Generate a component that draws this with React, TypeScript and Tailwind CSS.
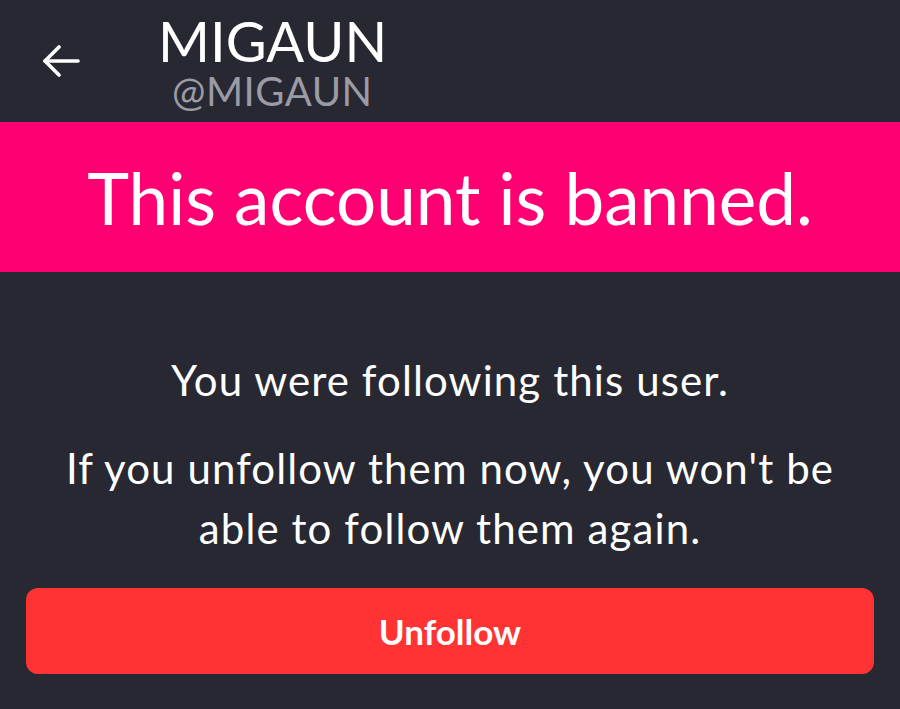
export default function App() {
  return (
    <div className="w-[900px] h-[709px] bg-[#272832] text-white overflow-hidden font-['Lato','Liberation_Sans',sans-serif] flex flex-col">
      {/* Header */}
      <header className="h-[122px] flex items-center">
        <button className="w-[122px] h-[122px] flex items-center justify-center">
          <svg width="38" height="32" viewBox="0 0 38 32" fill="none" stroke="white" strokeWidth="3.6" strokeLinecap="round" strokeLinejoin="round">
            <path d="M36 16H3" />
            <path d="M17 2L3 16l14 14" />
          </svg>
        </button>
        <div className="flex flex-col pl-[36px] mt-[2px]">
          <h1 className="text-[56px] leading-[58px] font-normal">MIGAUN</h1>
          <span className="text-[40px] leading-[42px] text-[#9b9ba6] pl-[14px] tracking-[0.5px]">@MIGAUN</span>
        </div>
      </header>

      {/* Banned banner */}
      <div className="h-[150px] bg-[#ff0073] flex items-center justify-center">
        <p className="text-[71px] leading-none">This account is banned.</p>
      </div>

      {/* Message */}
      <div className="flex flex-col items-center text-center pt-[82px] px-4 text-[42px] tracking-[1.1px]">
        <p className="leading-[52px]">You were following this user.</p>
        <p className="leading-[60px] mt-[32px]">
          If you unfollow them now, you won't be
          <br />
          able to follow them again.
        </p>
      </div>

      {/* Action */}
      <div className="px-[26px] pt-[30px]">
        <button className="w-full h-[86px] rounded-[12px] bg-[#ff3333] text-[35px] font-bold">
          Unfollow
        </button>
      </div>
    </div>
  );
}
